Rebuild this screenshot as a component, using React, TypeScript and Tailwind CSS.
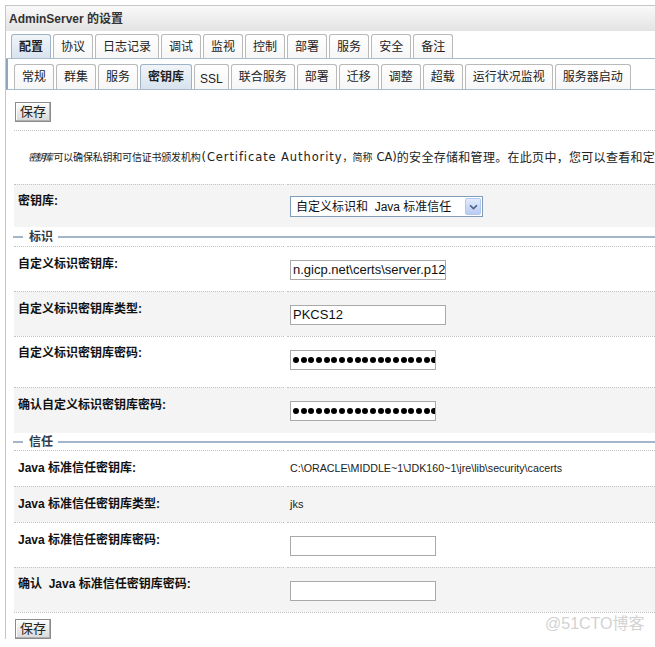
import { FC, ReactNode } from "react";

const tabs1 = ["配置", "协议", "日志记录", "调试", "监视", "控制", "部署", "服务", "安全", "备注"];
const tabs2 = ["常规", "群集", "服务", "密钥库", "SSL", "联合服务", "部署", "迁移", "调整", "超载", "运行状况监视", "服务器启动"];

const Tab: FC<{ label: string; active?: boolean; h: string }> = ({ label, active, h }) => (
  <div
    className={`${h} flex items-center whitespace-nowrap rounded-t-[3px] border border-b-0 text-[12px] text-[#222] ${
      active
        ? "border-[#9fb2c6] bg-gradient-to-b from-[#f1f5f9] to-[#d8e3ee] font-bold"
        : "border-[#b9b9b9] bg-gradient-to-b from-white to-[#f6f6f6]"
    } ${label === "SSL" ? "px-[5px] pt-[3px] text-[11px]" : "px-[7px]"}`}
  >
    {label}
  </div>
);

const SaveButton: FC = () => (
  <button className="ml-[1px] flex h-[20px] w-[36px] items-center justify-center border border-[#8c8c8c] bg-gradient-to-b from-[#fdfdfd] to-[#d9d9d9] text-[13px] text-[#222] shadow-[inset_-1px_-1px_0_#b0b0b0,inset_1px_1px_0_#fff]">
    保存
  </button>
);

const Input: FC<{ w: string; children?: ReactNode }> = ({ w, children }) => (
  <div className={`${w} flex h-[20px] items-center overflow-hidden whitespace-nowrap border border-[#a9a9a9] bg-white pl-[2px] text-[13px] text-[#111]`}>
    {children}
  </div>
);

const Dots: FC = () => (
  <div className="flex shrink-0 gap-[1.7px]">
    {Array.from({ length: 20 }).map((_, i) => (
      <span key={i} className="h-[6px] w-[6px] shrink-0 rounded-full bg-black" />
    ))}
  </div>
);

const Row: FC<{ h: string; gray?: boolean; labelPt: string; valuePt: string; label: ReactNode; children?: ReactNode }> = ({
  h,
  gray,
  labelPt,
  valuePt,
  label,
  children,
}) => (
  <div className={`${h} grid grid-cols-[270px_1fr] gap-x-[3px] ${gray ? "bg-[#f4f4f4]" : "bg-white"}`}>
    <div className={`${labelPt} border-t border-dotted border-[#c2c2c2] pl-[4px] text-[12px] font-bold leading-[16px] text-[#111]`}>
      {label}
    </div>
    <div className={`${valuePt} border-t border-dotted border-[#c2c2c2] pl-[3px]`}>{children}</div>
  </div>
);

const SectionHeader: FC<{ title: string; h: string }> = ({ title, h }) => (
  <div className={`${h} flex items-center`}>
    <span className="ml-[-1px] h-[2px] w-[10px] bg-[#a3b6c9]" />
    <span className="ml-[6px] text-[12px] font-bold text-[#2c3a4c]">{title}</span>
    <span className="ml-[5px] h-[2px] flex-1 bg-[#a3b6c9]" />
  </div>
);

export default function App() {
  return (
    <div className="relative h-[647px] w-[655px] overflow-hidden bg-white font-['Liberation_Sans','Noto_Sans_CJK_SC',sans-serif]">
      <div className="ml-[5px] mt-[5px] w-[720px] border-l border-t border-[#c6c6c6]">
        <div className="flex h-[25px] items-center bg-gradient-to-b from-[#f9f9f9] to-[#e3e3e3] pl-[3px] text-[12px] font-bold text-[#333]">
          AdminServer 的设置
        </div>

        <div className="flex gap-[2px] border-b border-[#a9bccc] pl-[5px] pt-[3px]">
          {tabs1.map((t, i) => (
            <Tab key={t} label={t} active={i === 0} h="h-[24px]" />
          ))}
        </div>

        <div className="flex gap-[2px] border-b border-l-2 border-b-[#a9bccc] border-l-[#8ea7bf] pl-[6px] pt-[5px]">
          {tabs2.map((t, i) => (
            <Tab key={t + i} label={t} active={t === "密钥库"} h="h-[25px]" />
          ))}
        </div>

        <div className="pl-[8px] pt-[12px]">
          <SaveButton />

          <div className="mt-[8px] flex h-[54px] items-center whitespace-nowrap border-t border-dotted border-[#c2c2c2] pl-[14px] text-[12px] text-[#222]">
            <span className="text-[10px] italic tracking-[-2.5px]">密钥库</span>
            <span className="ml-[3px] text-[10px] tracking-[-0.2px]">可以确保私钥和可信证书颁发机构</span>
            <span className="ml-[1px] font-['DejaVu_Sans',sans-serif] text-[11.5px] tracking-[0.9px]">(Certificate Authority</span>
            <span className="text-[10px]">，简称</span>
            <span className="ml-[4px] font-['DejaVu_Sans',sans-serif] text-[11.5px]">CA)</span>
            <span className="tracking-[0.3px]">的安全存储和管理。在此页中，您可以查看和定</span>
          </div>

          <Row h="h-[43px]" gray labelPt="pt-[8px]" valuePt="pt-[11px]" label="密钥库:">
            <div className="flex h-[21px] w-[193px] items-center justify-between border border-[#7f9db9] bg-white pl-[5px] text-[12px] text-[#111]">
              <span className="whitespace-nowrap">自定义标识和&nbsp; Java 标准信任</span>
              <span className="mr-[1px] flex h-[17px] w-[16px] items-center justify-center rounded-[2px] border border-[#b4c7ec] bg-gradient-to-b from-[#e2ebfd] to-[#b8cbf3]">
                <svg width="9" height="6" viewBox="0 0 9 6">
                  <path d="M1 1.2 L4.5 4.6 L8 1.2" fill="none" stroke="#4d6185" strokeWidth="1.6" />
                </svg>
              </span>
            </div>
          </Row>

          <SectionHeader title="标识" h="h-[19px]" />

          <Row h="h-[45px]" labelPt="pt-[9px]" valuePt="pt-[13px]" label="自定义标识密钥库:">
            <Input w="w-[156px]">n.gicp.net\certs\server.p12</Input>
          </Row>
          <Row h="h-[45px]" gray labelPt="pt-[9px]" valuePt="pt-[13px]" label="自定义标识密钥库类型:">
            <Input w="w-[156px]">PKCS12</Input>
          </Row>
          <Row h="h-[51px]" labelPt="pt-[8px]" valuePt="pt-[13px]" label="自定义标识密钥库密码:">
            <Input w="w-[146px]">
              <Dots />
            </Input>
          </Row>
          <Row h="h-[46px]" gray labelPt="pt-[9px]" valuePt="pt-[13px]" label="确认自定义标识密钥库密码:">
            <Input w="w-[146px]">
              <Dots />
            </Input>
          </Row>

          <SectionHeader title="信任" h="h-[17px]" />

          <Row h="h-[36px]" labelPt="pt-[9px]" valuePt="pt-[9px]" label="Java 标准信任密钥库:">
            <div className="whitespace-nowrap text-[10.7px] leading-[16px] text-[#222]">
              C:\ORACLE\MIDDLE~1\JDK160~1\jre\lib\security\cacerts
            </div>
          </Row>
          <Row h="h-[36px]" gray labelPt="pt-[9px]" valuePt="pt-[9px]" label="Java 标准信任密钥库类型:">
            <div className="text-[11px] leading-[16px] text-[#222]">jks</div>
          </Row>
          <Row h="h-[45px]" labelPt="pt-[9px]" valuePt="pt-[13px]" label="Java 标准信任密钥库密码:">
            <Input w="w-[146px]" />
          </Row>
          <Row h="h-[45px]" gray labelPt="pt-[8px]" valuePt="pt-[13px]" label="确认&nbsp; Java 标准信任密钥库密码:">
            <Input w="w-[146px]" />
          </Row>

          <div className="border-t border-dotted border-[#c2c2c2] pt-[6px]">
            <SaveButton />
          </div>
        </div>
      </div>

      <div className="absolute left-[545px] top-[612px] text-[16px] text-[#d2d2d2]">@51CTO博客</div>
    </div>
  );
}
